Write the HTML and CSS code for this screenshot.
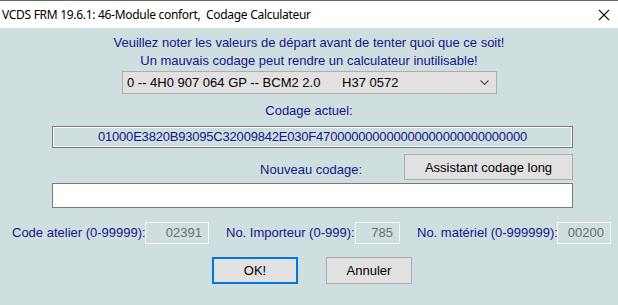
FILE: index.html
```html
<!DOCTYPE html>
<html lang="fr">

<head>
    <meta charset="UTF-8">
    <title>Codage Calculateur</title>
    <link rel="stylesheet" href="styles.css">
</head>

<body>
    <!-- Window title bar -->
    <div class="titlebar">
        <span class="title">VCDS FRM 19.6.1: 46-Module confort,&nbsp; Codage Calculateur</span>
        <svg class="close" width="12" height="12" viewBox="0 0 12 12">
            <path d="M1 1 L11 11 M11 1 L1 11" stroke="#111" stroke-width="1.1" fill="none" />
        </svg>
    </div>

    <div class="dialog">
        <div class="warning">
            <div>Veuillez noter les valeurs de départ avant de tenter quoi que ce soit!</div>
            <div>Un mauvais codage peut rendre un calculateur inutilisable!</div>
        </div>

        <div class="combo">
            <span class="combo-text">0 -- 4H0 907 064 GP -- BCM2 2.0&nbsp;&nbsp;&nbsp;&nbsp;&nbsp;&nbsp;H37 0572</span>
            <svg class="chevron" width="9" height="6" viewBox="0 0 9 6">
                <path d="M0.5 0.5 L4.5 4.5 L8.5 0.5" stroke="#555" stroke-width="1.2" fill="none" />
            </svg>
        </div>

        <div class="label center">Codage actuel:</div>
        <div class="code-box">01000E3820B93095C32009842E030F470000000000000000000000000000</div>

        <div class="new-row">
            <span class="label">Nouveau codage:</span>
            <button class="btn btn-long">Assistant codage long</button>
        </div>
        <div class="new-input"></div>

        <!-- Workshop / importer / equipment numbers -->
        <div class="fields">
            <div class="field">
                <span class="label lab-1">Code atelier (0-99999):</span>
                <span class="num num-5">02391</span>
            </div>
            <div class="field">
                <span class="label lab-2">No. Importeur (0-999):</span>
                <span class="num num-3">785</span>
            </div>
            <div class="field">
                <span class="label lab-3">No. matériel (0-999999):</span>
                <span class="num num-6">00200</span>
            </div>
        </div>

        <div class="actions">
            <button class="btn btn-ok">OK!</button>
            <button class="btn">Annuler</button>
        </div>
    </div>
</body>

</html>
```

FILE: styles.css
```css
body {
    margin: 0;
    width: 618px;
    height: 305px;
    overflow: hidden;
    font-family: "Liberation Sans", Arial, sans-serif;
    font-size: 13px;
    background-color: #cfdfdf;
}

/* Title bar */
.titlebar {
    height: 27px;
    border-top: 1px solid #6b6b6b;
    background-color: #fff;
    display: flex;
    align-items: center;
    padding-left: 2px;
    position: relative;
}

.title {
    font-family: "Noto Sans", sans-serif;
    font-size: 12px;
    letter-spacing: -0.3px;
    color: #000;
}

.close {
    position: absolute;
    left: 598px;
    top: 8px;
}

/* Dialog body */
.dialog {
    height: 277px;
    background-color: #cfdfdf;
    display: flex;
    flex-direction: column;
}

.label {
    color: #14148c;
    line-height: 18px;
    white-space: nowrap;
}

.center {
    text-align: center;
}

.warning {
    padding-top: 6px;
    text-align: center;
    color: #14148c;
    line-height: 18px;
}

.combo {
    margin: 1px 0 0 122px;
    width: 375px;
    height: 23px;
    box-sizing: border-box;
    border: 1px solid #adadad;
    background-color: #e1e1e1;
    display: flex;
    align-items: center;
    justify-content: space-between;
    padding: 0 7px 0 4px;
    color: #000;
}

.chevron {
    margin-top: 1px;
}

.dialog > .label.center {
    margin-top: 8px;
}

.code-box {
    margin: 6px 0 0 52px;
    width: 521px;
    height: 22px;
    box-sizing: border-box;
    border: 1px solid #7a7a7a;
    box-shadow: inset 0 0 0 1px #fff;
    color: #14148c;
    text-align: center;
    line-height: 20px;
    letter-spacing: -0.2px;
}

.new-row {
    margin-top: 6px;
    width: 573px;
    display: flex;
    justify-content: flex-end;
    align-items: center;
}

.new-row .label {
    margin-right: 42px;
    margin-top: 5px;
}

.btn {
    font-family: "Liberation Sans", Arial, sans-serif;
    font-size: 13px;
    color: #000;
    background-color: #e1e1e1;
    border: 1px solid #adadad;
    box-sizing: border-box;
    padding: 0;
}

.btn-long {
    width: 169px;
    height: 26px;
}

.new-input {
    margin: 3px 0 0 52px;
    width: 521px;
    height: 25px;
    box-sizing: border-box;
    border: 1px solid #7a7a7a;
    background-color: #fff;
}

.fields {
    margin-top: 14px;
    padding-left: 12px;
    display: flex;
    gap: 17px;
}

.field {
    display: flex;
    align-items: center;
    flex-shrink: 0;
}

.lab-1 {
    width: 133px;
}

.lab-2 {
    width: 129px;
}

.lab-3 {
    width: 140px;
}

.num {
    height: 22px;
    box-sizing: border-box;
    border: 1px solid #f7f7f7;
    color: #6d6d6d;
    text-align: right;
    padding-right: 6px;
    line-height: 20px;
    flex-shrink: 0;
}

.num-5 {
    width: 64px;
}

.num-3 {
    width: 45px;
}

.num-6 {
    width: 54px;
}

.actions {
    margin-top: 13px;
    padding-left: 212px;
    display: flex;
    gap: 28px;
}

.actions .btn {
    width: 86px;
    height: 27px;
}

.btn-ok {
    border: 2px solid #0078d7;
}
```
